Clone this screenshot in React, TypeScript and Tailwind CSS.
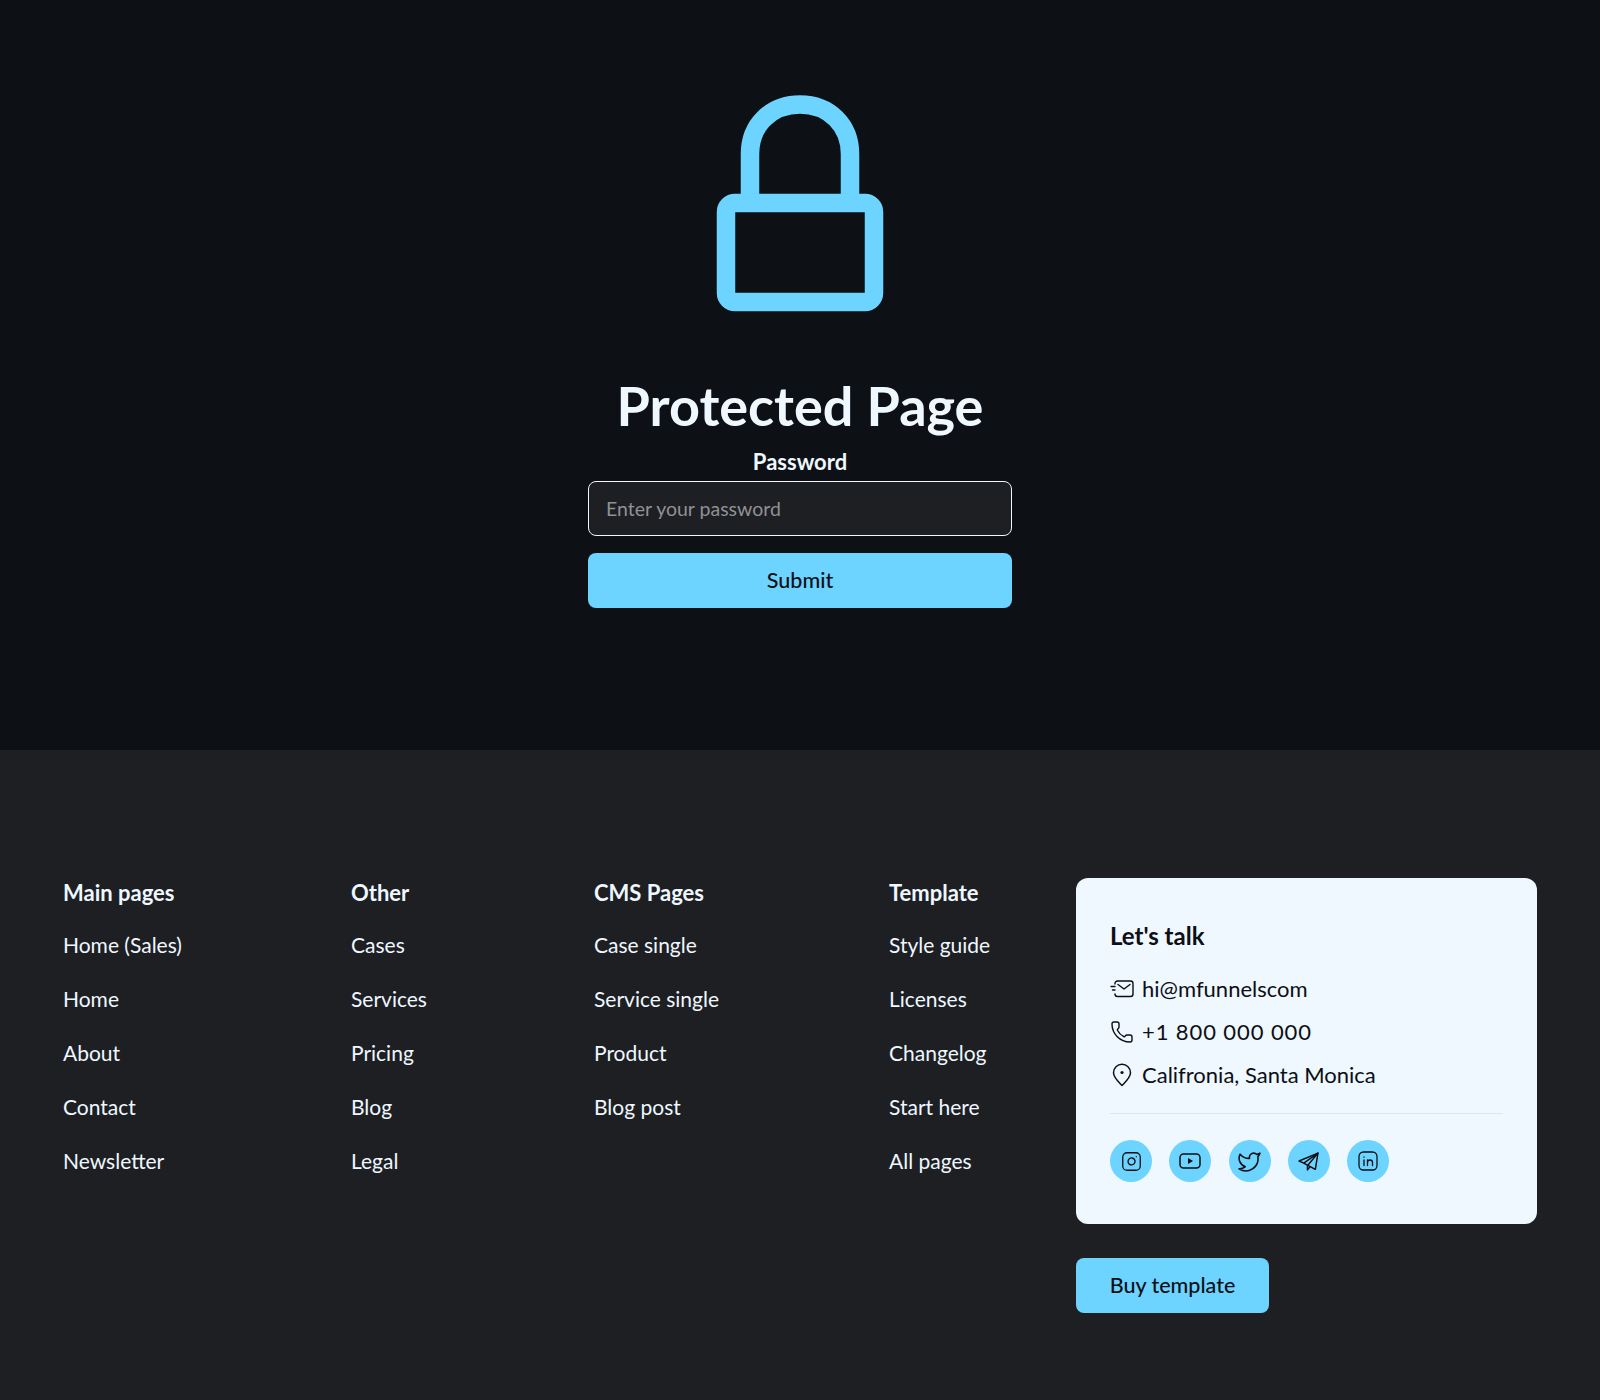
import { Instagram, Twitter, Phone } from "lucide-react";

const columns = [
  { title: "Main pages", width: "w-[288px]", links: ["Home (Sales)", "Home", "About", "Contact", "Newsletter"] },
  { title: "Other", width: "w-[243px]", links: ["Cases", "Services", "Pricing", "Blog", "Legal"] },
  { title: "CMS Pages", width: "w-[295px]", links: ["Case single", "Service single", "Product", "Blog post"] },
  { title: "Template", width: "w-[187px]", links: ["Style guide", "Licenses", "Changelog", "Start here", "All pages"] },
];

function LockIcon() {
  return (
    <svg width="168" height="218" viewBox="0 0 168 218" fill="none" stroke="#6dd3ff" strokeWidth="18.5">
      <path d="M34 100V59C34 30 55 9.5 84 9.5S134 30 134 59V100" />
      <rect x="10" y="108" width="148" height="99" rx="9" />
    </svg>
  );
}

function MailIcon() {
  return (
    <svg width="24" height="18" viewBox="0 0 24 18" fill="none" stroke="#0c0f14" strokeWidth="1.4" strokeLinecap="round" strokeLinejoin="round">
      <path d="M5 4V3.5C5 2 6 1 7.5 1H20.5C22 1 23 2 23 3.5V14C23 15.5 22 16.5 20.5 16.5H7.5C6 16.5 5 15.5 5 14" />
      <path d="M8 4.5L14 9L20 4.5" />
      <path d="M1 6.5H5M2.5 10H5" />
    </svg>
  );
}

function PinIcon() {
  return (
    <svg width="20" height="24" viewBox="0 0 20 24" fill="none" stroke="#0c0f14" strokeWidth="1.5" strokeLinejoin="round">
      <path d="M10 22.5C6 18.5 1.5 14.5 1.5 9.8A8.5 8.5 0 0 1 18.5 9.8C18.5 14.5 14 18.5 10 22.5Z" />
      <circle cx="10" cy="9.5" r="1.6" fill="#0c0f14" stroke="none" />
    </svg>
  );
}

function YoutubeIcon() {
  return (
    <svg width="22" height="16" viewBox="0 0 22 16" fill="none" stroke="#0c0f14" strokeWidth="1.5">
      <rect x="1" y="1" width="20" height="14" rx="3.5" />
      <path d="M9 5L14 8L9 11Z" fill="#0c0f14" stroke="none" />
    </svg>
  );
}

function TelegramIcon() {
  return (
    <svg width="21" height="21" viewBox="0 0 20 20" fill="none" stroke="#0c0f14" strokeWidth="1.4" strokeLinejoin="round">
      <path d="M1 9.5L19 2L16.5 17.5L5.5 11.5L1 9.5Z" />
      <path d="M5.5 11.5L19 2L9 14L9 18L11.5 15" />
    </svg>
  );
}

function LinkedinIcon() {
  return (
    <svg width="20" height="20" viewBox="0 0 20 20" fill="none" stroke="#0c0f14" strokeWidth="1.3" strokeLinecap="round">
      <rect x="1" y="1" width="18" height="18" rx="4.5" />
      <path d="M6 9V14.5M6 6V6.2" />
      <path d="M9.5 14.5V9M9.5 11.5C9.5 10 10.6 9 12 9C13.4 9 14.5 10 14.5 11.5V14.5" />
    </svg>
  );
}

function SocialButton({ children }: { children: React.ReactNode }) {
  return <div className="w-[42px] h-[42px] rounded-full bg-[#6dd3ff] flex items-center justify-center">{children}</div>;
}

export default function App() {
  return (
    <div className="w-[1600px] h-[1400px] font-['Lato',sans-serif] bg-[#1d1f23]">
      {/* protected form */}
      <section className="h-[750px] bg-[#0d1015] flex flex-col items-center pt-[95px]">
        <LockIcon />
        <h1 className="mt-[59px] text-[54px] leading-[68px] font-bold text-[#eff7ff]">Protected Page</h1>
        <label className="mt-[7px] text-[22px] leading-[30px] font-bold text-[#eff7ff]">Password</label>
        <div className="mt-[4px] w-[424px] h-[55px] rounded-lg border border-[#eff7ff] bg-[#1d1f23] flex items-center px-[17px] text-[19.5px] text-[#8e9196]">
          Enter your password
        </div>
        <button className="mt-[17px] w-[424px] h-[55px] rounded-lg bg-[#6dd3ff] text-[21.5px] font-medium text-[#0c0f14]">Submit</button>
      </section>

      {/* footer */}
      <footer className="flex pt-[128px] pl-[63px]">
        {columns.map((col) => (
          <div key={col.title} className={`${col.width} flex flex-col gap-[24px]`}>
            <h4 className="mb-[-2px] text-[22px] leading-[30px] font-bold text-[#eff7ff]">{col.title}</h4>
            {col.links.map((l) => (
              <a key={l} className="text-[21px] leading-[30px] text-[#eff7ff]">{l}</a>
            ))}
          </div>
        ))}
        <div className="w-[461px] flex flex-col items-start gap-[34px]">
          <div className="w-[461px] h-[346px] rounded-xl bg-[#eff7ff] px-[34px] pt-[43px] text-[#0c0f14]">
            <h4 className="text-[24px] leading-[30px] font-bold">Let's talk</h4>
            <div className="mt-[23px] flex flex-col gap-[13px] text-[22px] leading-[30px]">
              <div className="flex items-center gap-[8px]"><MailIcon /><span>hi@mfunnelscom</span></div>
              <div className="flex items-center gap-[8px]"><Phone size={24} strokeWidth={1.4} /><span className="tracking-[0.9px]">+1 800 000 000</span></div>
              <div className="flex items-center gap-[10px] pl-[2px]"><PinIcon /><span>Califronia, Santa Monica</span></div>
            </div>
            <div className="mt-[23px] h-px bg-[#dde6ee]" />
            <div className="mt-[26px] flex gap-[17.3px]">
              <SocialButton><Instagram size={21} strokeWidth={1.5} /></SocialButton>
              <SocialButton><YoutubeIcon /></SocialButton>
              <SocialButton><Twitter size={25} strokeWidth={1.5} /></SocialButton>
              <SocialButton><TelegramIcon /></SocialButton>
              <SocialButton><LinkedinIcon /></SocialButton>
            </div>
          </div>
          <button className="w-[193px] h-[55px] rounded-lg bg-[#6dd3ff] text-[21.5px] font-medium text-[#0c0f14]">Buy template</button>
        </div>
      </footer>
    </div>
  );
}
